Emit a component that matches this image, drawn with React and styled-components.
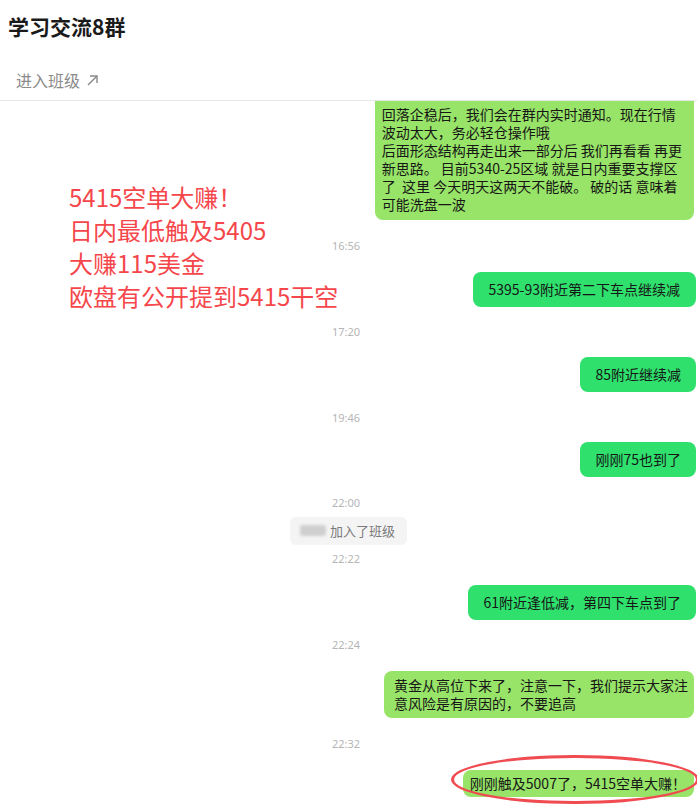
import React from 'react'
import styled, { createGlobalStyle } from 'styled-components'

const GlobalStyle = createGlobalStyle`
  html, body {
    margin: 0;
    padding: 0;
    background: #fff;
  }
  body {
    font-family: "Noto Sans CJK SC", "Noto Sans", sans-serif;
  }
`;

const Page = styled.div`
  width: 697px;
  height: 805px;
  display: flex;
  flex-direction: column;
  overflow: hidden;
  background: #fff;
`;

const Header = styled.div`
  flex: none;
  border-bottom: 1px solid #e8e8e8;
`;

const Title = styled.h1`
  margin: 0;
  padding: 16px 8px 20px;
  font-size: 21px;
  line-height: 20px;
  font-weight: 700;
  color: #1a1a1a;
`;

const EnterRow = styled.div`
  display: flex;
  align-items: center;
  gap: 6px;
  padding: 13px 16px 9px;
  font-size: 16px;
  line-height: 22px;
  color: #8a8a8a;
`;

const Chat = styled.div`
  position: relative;
  flex: 1;
  overflow: hidden;
  display: flex;
  flex-direction: column;
  justify-content: flex-end;
  padding-bottom: 8px;
`;

const Time = styled.div`
  text-align: center;
  font-family: "Noto Sans", sans-serif;
  font-size: 11px;
  line-height: 14px;
  height: 14px;
  color: #b5b5b5;
  padding: ${({ $top = 19 }) => $top}px 5px ${({ $bottom = 19 }) => $bottom}px 0;
`;

const Row = styled.div`
  display: flex;
  justify-content: flex-end;
  padding-right: ${({ $light }) => ($light ? 3 : 1)}px;
`;

const Bubble = styled.div`
  position: relative;
  background: ${({ $light }) => ($light ? '#97e468' : '#2fe06d')};
  color: #161616;
  font-size: 14px;
  line-height: ${({ $lh = 19 }) => $lh}px;
  padding: ${({ $pad }) => $pad};
  border-radius: 8px;
  white-space: pre;
`;

const Circle = styled.div`
  position: absolute;
  left: -12px;
  right: -5px;
  top: -15px;
  bottom: -7px;
  border: 3px solid #ef4b50;
  border-radius: 50%;
  pointer-events: none;
`;

const SystemRow = styled.div`
  display: flex;
  justify-content: center;
`;

const SystemNote = styled.div`
  display: flex;
  align-items: center;
  height: 28px;
  padding: 0 12px 0 10px;
  background: #f4f4f4;
  border-radius: 6px;
  font-size: 13px;
  color: #7a7a7a;
`;

const BlurName = styled.span`
  width: 26px;
  height: 11px;
  margin-right: 4px;
  background: #cfcfcf;
  border-radius: 3px;
  filter: blur(1.5px);
`;

const Annotation = styled.div`
  position: absolute;
  left: 69px;
  top: 79px;
  font-size: 24px;
  line-height: 33px;
  color: #f5474b;
  white-space: pre;
`;

const ArrowIcon = () => (
  <svg width="13" height="13" viewBox="0 0 13 13" fill="none" stroke="#8a8a8a" strokeWidth="1.4">
    <path d="M2 11 L11 2" />
    <path d="M4 2 H11 V9" />
  </svg>
);

const firstText = [
  '回落企稳后，我们会在群内实时通知。现在行情',
  '波动太大，务必轻仓操作哦',
  '后面形态结构再走出来一部分后 我们再看看 再更',
  '新思路。 目前5340-25区域 就是日内重要支撑区',
  '了  这里 今天明天这两天不能破。 破的话 意味着',
  '可能洗盘一波',
].join('\n');

export default function App() {
  return (
    <Page>
      <GlobalStyle />
      <Header>
        <Title>学习交流8群</Title>
        <EnterRow>
          进入班级
          <ArrowIcon />
        </EnterRow>
      </Header>
      <Chat>
        <Row $light>
          <Bubble $light $lh={18} $pad="20px 12px 7px 7px">{firstText}</Bubble>
        </Row>
        <Time>16:56</Time>
        <Row>
          <Bubble $pad="8px 16px">5395-93附近第二下车点继续减</Bubble>
        </Row>
        <Time $top={18} $bottom={18}>17:20</Time>
        <Row>
          <Bubble $pad="8px 15px">85附近继续减</Bubble>
        </Row>
        <Time $top={19} $bottom={17}>19:46</Time>
        <Row>
          <Bubble $pad="8px 15px">刚刚75也到了</Bubble>
        </Row>
        <Time $bottom={7}>22:00</Time>
        <SystemRow>
          <SystemNote>
            <BlurName />
            加入了班级
          </SystemNote>
        </SystemRow>
        <Time $top={7}>22:22</Time>
        <Row>
          <Bubble $pad="8px 15px">61附近逢低减，第四下车点到了</Bubble>
        </Row>
        <Time $top={18}>22:24</Time>
        <Row $light>
          <Bubble $light $lh={18.5} $pad="5px 6px 5px 10px">
            {'黄金从高位下来了，注意一下，我们提示大家注\n意风险是有原因的，不要追高'}
          </Bubble>
        </Row>
        <Time>22:32</Time>
        <Row $light>
          <Bubble $light $lh={18.5} $pad="4px 8px 5px 7px">
            刚刚触及5007了，5415空单大赚！
            <Circle />
          </Bubble>
        </Row>
        <Annotation>
          {'5415空单大赚！\n日内最低触及5405\n大赚115美金\n欧盘有公开提到5415干空'}
        </Annotation>
      </Chat>
    </Page>
  );
}
